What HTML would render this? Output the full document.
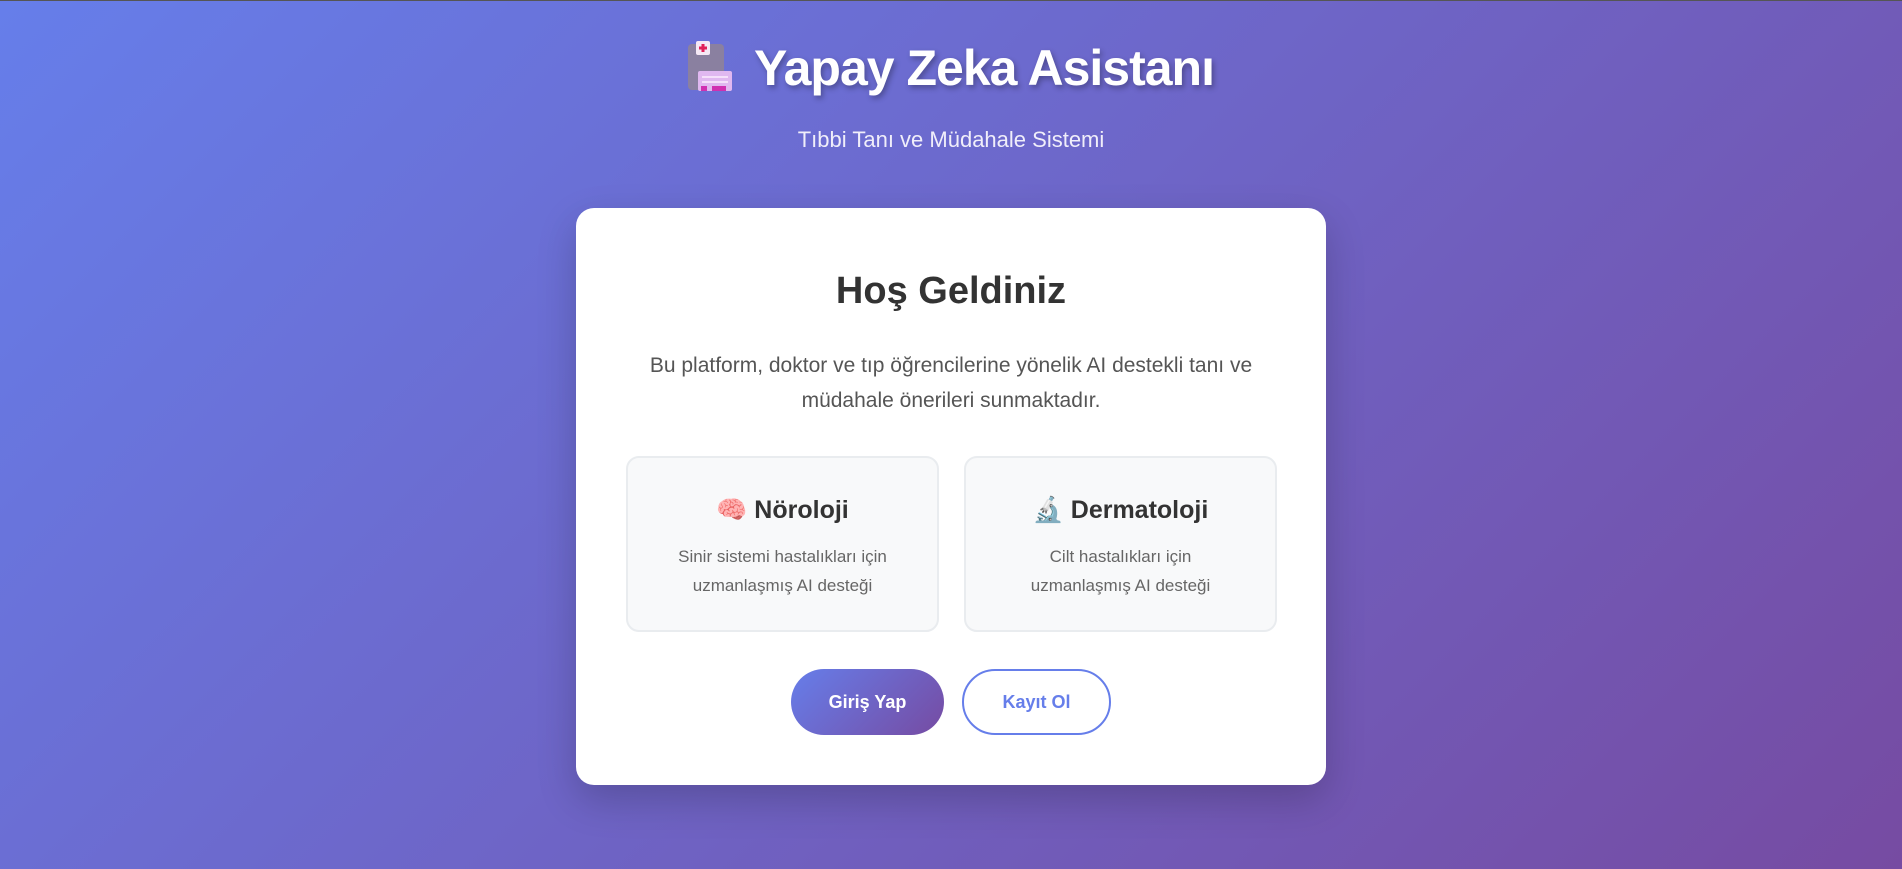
<!DOCTYPE html>
<html><head><meta charset="utf-8"><style>
*{margin:0;padding:0;box-sizing:border-box}
html,body{width:1902px;height:869px;overflow:hidden}
body{background:linear-gradient(135deg,#667eea 0%,#764ba2 100%);font-family:"Liberation Sans",sans-serif;position:relative;border-top:1px solid #555}
.title{position:absolute;top:38px;left:0;width:1902px;text-align:center;color:#fff;font-weight:bold;font-size:50px;letter-spacing:-1px;text-shadow:2px 3px 6px rgba(0,0,0,.3)}
.title svg{vertical-align:-6px;margin-right:22px}
.sub{position:absolute;top:126px;left:0;width:1902px;text-align:center;color:#f0eefa;font-size:22px}
.card{position:absolute;left:576px;top:207px;width:750px;height:577px;background:#fff;border-radius:18px;box-shadow:0 15px 40px rgba(0,0,0,.2)}
h2{position:absolute;top:62px;left:0;width:100%;text-align:center;font-size:38px;color:#333}
.p{position:absolute;top:140px;left:0;width:100%;text-align:center;color:#555;font-size:21px;line-height:35px}
.boxes{position:absolute;top:248px;left:50px;display:flex;gap:25px}
.box{width:313px;height:176px;background:#f8f9fa;border:2px solid #e9ecef;border-radius:13px;text-align:center}
.box h3{font-size:25px;color:#333;margin-top:38px}
.box p{font-size:17px;color:#666;line-height:29px;margin-top:17px}
.btns{position:absolute;top:461px;left:0;width:100%;display:flex;justify-content:center;gap:18px}
.b1{width:153px;height:66px;border-radius:33px;background:linear-gradient(135deg,#667eea,#764ba2);color:#fff;font-weight:bold;font-size:18px;display:flex;align-items:center;justify-content:center}
.b2{width:149px;height:66px;border-radius:33px;border:2px solid #667eea;color:#667eea;font-weight:bold;font-size:18px;display:flex;align-items:center;justify-content:center;background:#fff}
</style></head><body>
<div class="title"><svg width="44" height="50" viewBox="0 0 44 50"><rect x="0" y="3" width="36" height="46" rx="4" fill="#8a80a0"/><rect x="8" y="0" width="14" height="14" rx="2" fill="#f5e8f5"/><path d="M15 3v8M11 7h8" stroke="#e0205a" stroke-width="3"/><rect x="10" y="30" width="34" height="20" rx="2" fill="#e0b8f0"/><path d="M14 36h26M14 41h26" stroke="#f5e0fa" stroke-width="2"/><rect x="13" y="45" width="6" height="5" fill="#d030b0"/><rect x="24" y="45" width="14" height="5" fill="#d030b0"/></svg>Yapay Zeka Asistanı</div>
<div class="sub">Tıbbi Tanı ve Müdahale Sistemi</div>
<div class="card">
<h2>Hoş Geldiniz</h2>
<div class="p">Bu platform, doktor ve tıp öğrencilerine yönelik AI destekli tanı ve<br>müdahale önerileri sunmaktadır.</div>
<div class="boxes">
<div class="box"><h3>🧠 Nöroloji</h3><p>Sinir sistemi hastalıkları için<br>uzmanlaşmış AI desteği</p></div>
<div class="box"><h3>🔬 Dermatoloji</h3><p>Cilt hastalıkları için<br>uzmanlaşmış AI desteği</p></div>
</div>
<div class="btns"><div class="b1">Giriş Yap</div><div class="b2">Kayıt Ol</div></div>
</div>
</body></html>
